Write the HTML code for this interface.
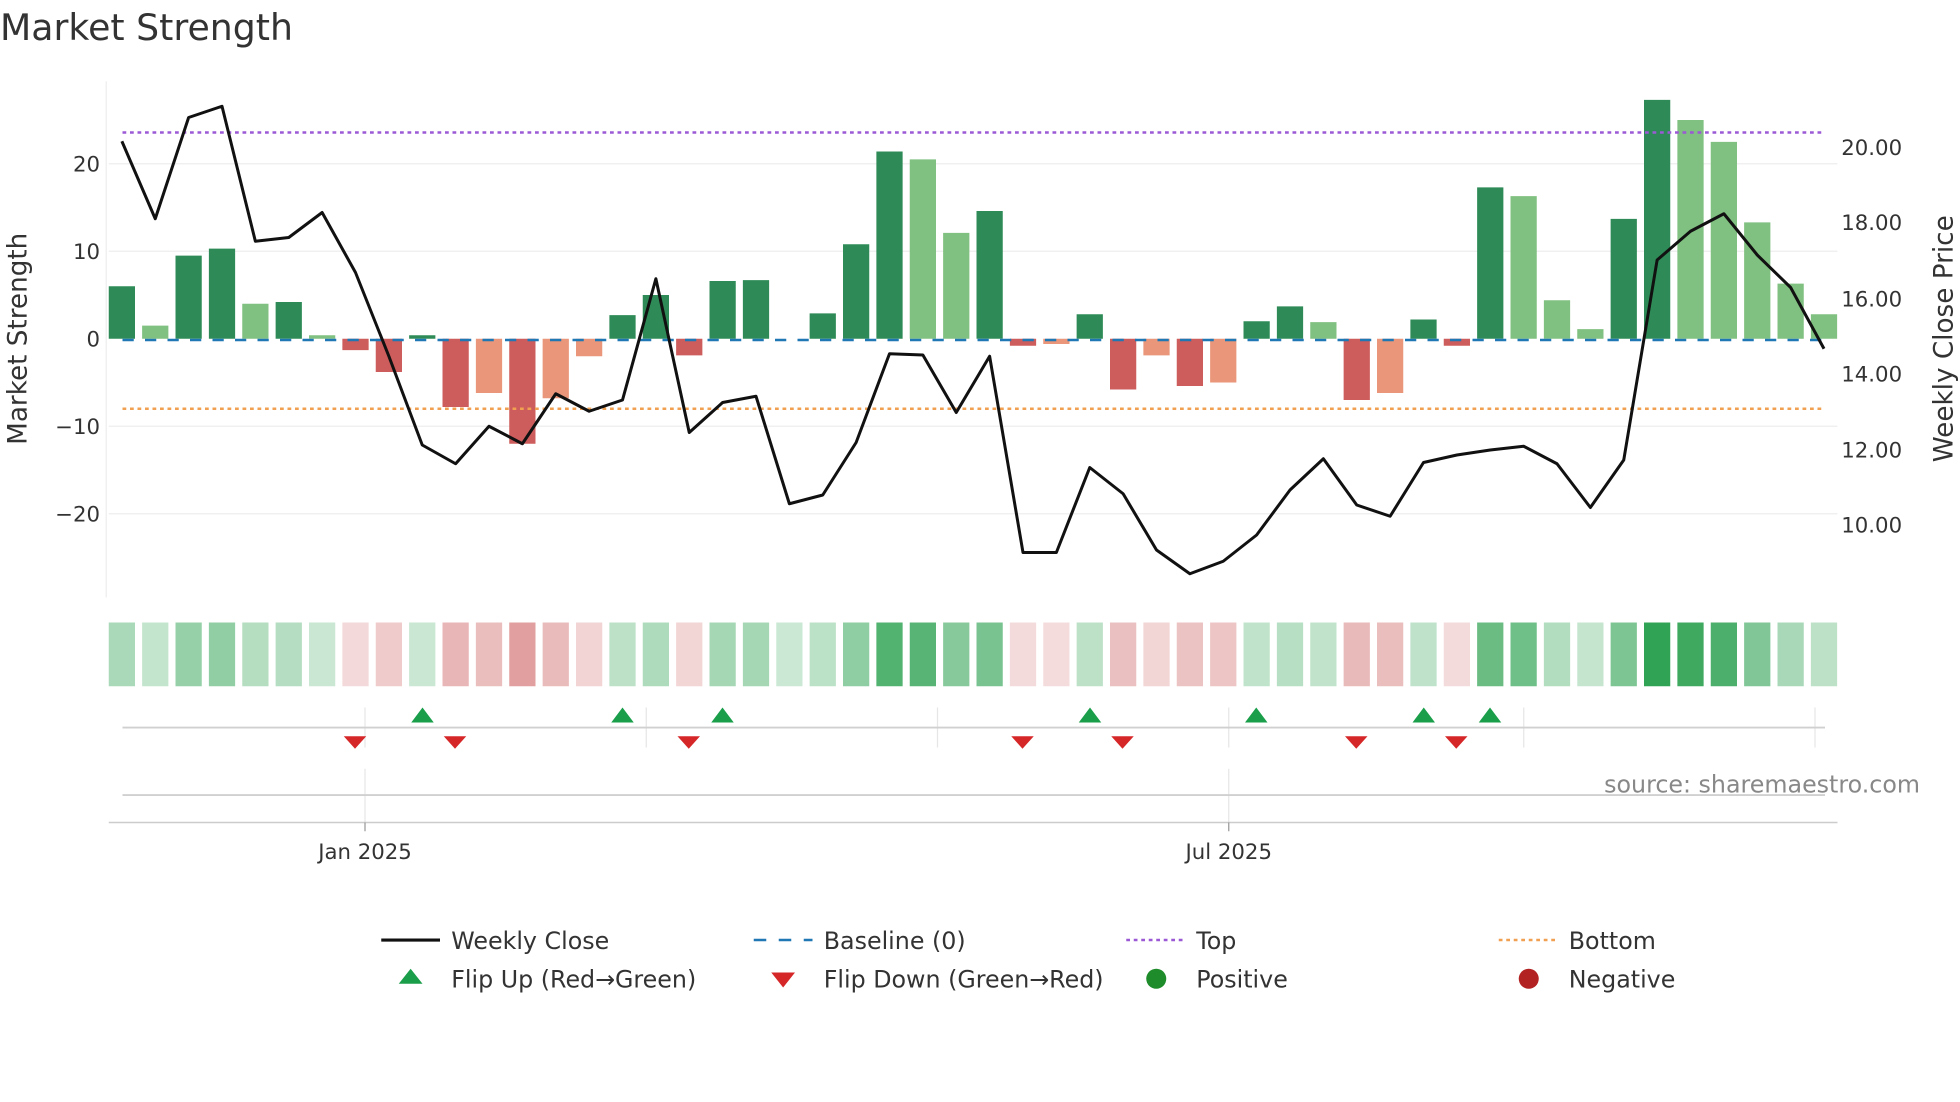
<!DOCTYPE html>
<html><head><meta charset="utf-8"><style>
html,body{margin:0;padding:0;background:#fff;width:1960px;height:1102px;overflow:hidden}
svg{display:block;font-family:"DejaVu Sans","Liberation Sans",sans-serif}
</style></head><body>
<svg id="s" width="1960" height="1102" viewBox="0 0 1568 881.6" xmlns="http://www.w3.org/2000/svg">
<text x="0" y="32" font-size="29" fill="#333">Market Strength</text>
<g stroke="#eeeeee" stroke-width="1">
<line x1="87" y1="131" x2="1470" y2="131"/><line x1="87" y1="201" x2="1470" y2="201"/>
<line x1="87" y1="341" x2="1470" y2="341"/><line x1="87" y1="411" x2="1470" y2="411"/>
<line x1="85" y1="65" x2="85" y2="478"/>
</g>
<g font-size="17" fill="#333" text-anchor="end">
<text x="80" y="137">20</text><text x="80" y="207">10</text><text x="80" y="277">0</text>
<text x="80" y="347">−10</text><text x="80" y="417">−20</text>
</g>
<g font-size="17" fill="#333">
<text x="1473" y="124">20.00</text><text x="1473" y="184">18.00</text><text x="1473" y="245">16.00</text>
<text x="1473" y="305">14.00</text><text x="1473" y="366">12.00</text><text x="1473" y="426">10.00</text>
</g>
<text transform="translate(21,271) rotate(-90)" font-size="21" fill="#333" text-anchor="middle">Market Strength</text>
<text transform="translate(1562,271) rotate(-90)" font-size="21" fill="#333" text-anchor="middle">Weekly Close Price</text>
<g id="bars"></g>
<line x1="98" y1="272" x2="1460" y2="272" stroke="#1f77b4" stroke-width="2" stroke-dasharray="9,9"/>
<line x1="98" y1="106" x2="1460" y2="106" stroke="#9b59d6" stroke-width="2" stroke-dasharray="3,3"/>
<line x1="98" y1="327" x2="1460" y2="327" stroke="#f0a050" stroke-width="2" stroke-dasharray="3,3"/>
<polyline id="pl" fill="none" stroke="#111" stroke-width="2.4" stroke-linejoin="round"/>
<g id="cells"></g>
<g stroke="#e6e6e6" stroke-width="1">
<line x1="292" y1="566" x2="292" y2="598"/><line x1="517" y1="566" x2="517" y2="598"/>
<line x1="750" y1="566" x2="750" y2="598"/><line x1="983" y1="566" x2="983" y2="598"/>
<line x1="1219" y1="566" x2="1219" y2="598"/><line x1="1452" y1="566" x2="1452" y2="598"/>
<line x1="292" y1="615" x2="292" y2="658"/><line x1="983" y1="615" x2="983" y2="658"/>
</g>
<line x1="98" y1="582" x2="1460" y2="582" stroke="#d0d0d0" stroke-width="1.5"/>
<line x1="98" y1="636" x2="1460" y2="636" stroke="#d0d0d0" stroke-width="1.5"/>
<line x1="87" y1="658" x2="1470" y2="658" stroke="#cccccc" stroke-width="1.2"/>
<line x1="292" y1="658" x2="292" y2="665" stroke="#999"/><line x1="983" y1="658" x2="983" y2="665" stroke="#999"/>
<g id="flips"></g>
<text x="1536" y="634" font-size="19" fill="#888" text-anchor="end">source: sharemaestro.com</text>
<g font-size="17" fill="#333" text-anchor="middle"><text x="292" y="687">Jan 2025</text><text x="983" y="687">Jul 2025</text></g>
<g font-size="19" fill="#333">
<line x1="305" y1="752" x2="352" y2="752" stroke="#111" stroke-width="2.5"/><text x="361" y="759">Weekly Close</text>
<line x1="603" y1="752" x2="650" y2="752" stroke="#1f77b4" stroke-width="2" stroke-dasharray="10,10"/><text x="659" y="759">Baseline (0)</text>
<line x1="901" y1="752" x2="947" y2="752" stroke="#9b59d6" stroke-width="2" stroke-dasharray="3,3"/><text x="957" y="759">Top</text>
<line x1="1199" y1="752" x2="1245" y2="752" stroke="#f0a050" stroke-width="2" stroke-dasharray="3,3"/><text x="1255" y="759">Bottom</text>
<polygon points="319,787 338,787 328.5,775" fill="#1a9e4a"/><text x="361" y="790">Flip Up (Red→Green)</text>
<polygon points="617,778 636,778 626.5,790" fill="#d62728"/><text x="659" y="790">Flip Down (Green→Red)</text>
<circle cx="925" cy="783" r="8" fill="#1e8c2a"/><text x="957" y="790">Positive</text>
<circle cx="1223" cy="783" r="8" fill="#b22222"/><text x="1255" y="790">Negative</text>
</g>
</svg>
<script>
var v=[[6,1],[1.5,0],[9.5,1],[10.3,1],[4,0],[4.2,1],[0.4,0],[-1.3,1],[-3.8,1],[0.4,1],[-7.8,1],[-6.2,0],[-12,1],[-6.8,0],[-2,0],[2.7,1],[5,1],[-1.9,1],[6.6,1],[6.7,1],[0,1],[2.9,1],[10.8,1],[21.4,1],[20.5,0],[12.1,0],[14.6,1],[-0.8,1],[-0.6,0],[2.8,1],[-5.8,1],[-1.9,0],[-5.4,1],[-5,0],[2,1],[3.7,1],[1.9,0],[-7,1],[-6.2,0],[2.2,1],[-0.8,1],[17.3,1],[16.3,0],[4.4,0],[1.1,0],[13.7,1],[27.3,1],[25,0],[22.5,0],[13.3,0],[6.3,0],[2.8,0]];
var py=[113,175,94,85,193,190,170,218,285,356,371,341,355,315,329,320,223,346,322,317,403,396,354,283,284,330,285,442,442,374,395,440,459,449,428,392,367,404,413,370,364,360,357,371,406,368,208,185,171,204,230,279];
var ns="http://www.w3.org/2000/svg",B=document.getElementById('bars'),C=document.getElementById('cells'),F=document.getElementById('flips');
function el(t,a,p){var e=document.createElementNS(ns,t);for(var k in a)e.setAttribute(k,a[k]);p.appendChild(e);return e;}
var pts=[];
v.forEach(function(d,i){var x=97.5+i*26.7,val=d[0],y=271-val*7,h=Math.abs(val*7);
var col=val>=0?(d[1]?'#2e8b57':'#80c080'):(d[1]?'#cd5c5c':'#e9967a');
if(h>0.1)el('rect',{x:x-10.5,y:val>=0?y:271,width:21,height:h,fill:col},B);
pts.push(x+','+py[i]);
var a,c;if(val>=0){a=0.25+0.75*Math.min(val/27.3,1);c='rgba(49,163,84,'+a+')';}else{a=0.18+0.37*Math.min(-val/12,1);c='rgba(200,80,80,'+a+')';}
el('rect',{x:x-10.5,y:498,width:21,height:51,fill:c},C);});
document.getElementById('pl').setAttribute('points',pts.join(' '));
[338,498,578,872,1005,1139,1192].forEach(function(x){el('polygon',{points:(x-9)+',578 '+(x+9)+',578 '+x+',566',fill:'#1a9e4a'},F);});
[284,364,551,818,898,1085,1165].forEach(function(x){el('polygon',{points:(x-9)+',589 '+(x+9)+',589 '+x+',599',fill:'#d62728'},F);});
</script>
</body></html>
